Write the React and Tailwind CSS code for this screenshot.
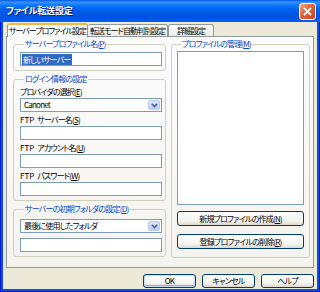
const ui = "font-['Noto_Sans_CJK_JP','Noto_Sans',sans-serif] [font-feature-settings:'palt']";
const txt = "text-[8px] tracking-[-0.8px] whitespace-nowrap";

const Key = ({ k }) => (
  <>
    (<span className="underline">{k}</span>)
  </>
);

const Ftp = () => <span className="mr-[3px] tracking-normal">FTP</span>;

const Group = ({ label, className = "", children }) => (
  <fieldset className={`border border-[#D0D0BF] rounded-[3px] min-w-0 ${className}`}>
    <legend className={`ml-[4px] px-[1px] text-[#0046D5] leading-[10px] ${txt}`}>{label}</legend>
    {children}
  </fieldset>
);

const Field = ({ className = "" }) => (
  <div className={`h-[14px] border border-[#7F9DB9] bg-white ${className}`} />
);

const Combo = ({ value, className = "" }) => (
  <div className={`h-[14px] border border-[#7F9DB9] bg-white flex items-stretch ${className}`}>
    <span className={`flex-1 pl-[3px] leading-[12px] text-black ${txt}`}>{value}</span>
    <span className="m-[1px] w-[12px] rounded-[2px] border border-[#B9CCF6] bg-[linear-gradient(to_bottom,#DCE6FD,#B8CDF8)] flex items-center justify-center">
      <svg width="7" height="5" viewBox="0 0 7 5">
        <path d="M0.8 0.8 L3.5 3.5 L6.2 0.8" fill="none" stroke="#4D6185" strokeWidth="1.6" />
      </svg>
    </span>
  </div>
);

const Label = ({ children }) => (
  <div className={`h-[10px] leading-[10px] text-black mt-[3px] mb-[1px] ${txt}`}>{children}</div>
);

const Button = ({ children, className = "" }) => (
  <button
    type="button"
    className={`border border-[#003C74] rounded-[3px] bg-[linear-gradient(to_bottom,#FFFFFF,#F3F3EF_70%,#DCD8CE)] leading-[10px] text-black flex items-center justify-center ${txt} ${className}`}
  >
    {children}
  </button>
);

const Tab = ({ children, active, className = "" }) => (
  <div
    className={`border border-[#919B9C] border-b-0 rounded-t-[3px] flex items-center justify-center leading-[10px] text-black text-[8px] tracking-[-1px] whitespace-nowrap ${
      active
        ? "relative z-10 h-[14px] -mb-px bg-[#FCFCFE] border-t-2 border-t-[#F6B445]"
        : "h-[12px] bg-[linear-gradient(to_bottom,#FFFFFF,#ECEBE6)]"
    } ${className}`}
  >
    {children}
  </div>
);

export default function App() {
  return (
    <div className={`w-[320px] h-[292px] flex flex-col bg-[#0A4FE0] ${ui}`}>
      <div className="h-[22px] shrink-0 flex items-center pl-[6px] bg-[linear-gradient(to_bottom,#0058EE,#3A93FF_10%,#1B84FF_18%,#0670F8_30%,#0260EC_45%,#0056E4_65%,#0054E3_80%,#005BF3_92%,#0A5FEA)]">
        <span className="text-white font-bold text-[9px] tracking-[-0.2px] leading-[12px] [text-shadow:1px_1px_0_#0A1F80]">ファイル転送設定</span>
        <span className="ml-auto mr-[4px] w-[17px] h-[17px] rounded-[3px] border border-white bg-[linear-gradient(135deg,#F0A88A,#E0623A_45%,#C8441C)] flex items-center justify-center">
          <svg width="9" height="9" viewBox="0 0 9 9">
            <path d="M1 1 L8 8 M8 1 L1 8" stroke="white" strokeWidth="1.8" />
          </svg>
        </span>
      </div>
      <div className="flex-1 px-[3px] pb-[3px] flex shadow-[inset_1px_0_#0019CF,inset_-1px_0_#0019CF,inset_0_-1px_#0019CF]">
        <div className="flex-1 bg-[#ECE9D8] flex flex-col">
          <div className="h-[14px] flex items-end pl-[4px]">
            <Tab active className="w-[81px]">サーバープロファイル設定</Tab>
            <Tab className="w-[80px] border-l-0">転送モード自動判別設定</Tab>
            <Tab className="w-[46px]">詳細設定</Tab>
          </div>
          <div className="mx-[3px] h-[232px] border border-[#919B9C] bg-[linear-gradient(to_bottom,#FCFCFE,#F4F3EE)] flex gap-[5px] pl-[6px] pr-[3px] pt-[2px] pb-[9px]">
            <div className="w-[153px] flex flex-col gap-[3px]">
              <Group label={<>サーバープロファイル名<Key k="P" /></>} className="pl-[6px] pr-[3px] pb-[4px]">
                <div className="mt-[3px] h-[14px] border border-[#7F9DB9] bg-white flex items-center pl-[1px]">
                  <span className={`bg-[#316AC5] text-white leading-[11px] px-[1px] ${txt}`}>新しいサーバー</span>
                </div>
              </Group>
              <Group label="ログイン情報の設定" className="pl-[6px] pr-[3px] pb-[4px]">
                <Label>プロバイダの選択<Key k="E" /></Label>
                <Combo value="Canonet" />
                <Label><Ftp />サーバー名<Key k="S" /></Label>
                <Field />
                <Label><Ftp />アカウント名<Key k="U" /></Label>
                <Field />
                <Label><Ftp />パスワード<Key k="W" /></Label>
                <Field />
              </Group>
              <Group label={<>サーバーの初期フォルダの設定<Key k="D" /></>} className="pl-[6px] pr-[3px] pb-[4px]">
                <Combo value="最後に使用したフォルダ" className="mt-[5px]" />
                <Field className="mt-[5px]" />
              </Group>
            </div>
            <Group label={<>プロファイルの管理<Key k="M" /></>} className="flex-1 flex flex-col px-[5px] pb-[8px]">
              <div className="mt-[2px] h-[154px] border border-[#7F9DB9] bg-white" />
              <Button className="w-full mt-[6px] h-[15px]">新規プロファイルの作成<Key k="N" /></Button>
              <Button className="w-full mt-[8px] h-[15px]">登録プロファイルの削除<Key k="R" /></Button>
            </Group>
          </div>
          <div className="mt-[6px] flex justify-end gap-[6px] pr-[3px]">
            <Button className="w-[53px] h-[14px] shadow-[inset_0_0_0_1px_#C9DCF9,inset_0_-1px_0_1px_#8CB1EA]">OK</Button>
            <Button className="w-[53px] h-[14px]">キャンセル</Button>
            <Button className="w-[53px] h-[14px]">ヘルプ</Button>
          </div>
        </div>
      </div>
    </div>
  );
}
